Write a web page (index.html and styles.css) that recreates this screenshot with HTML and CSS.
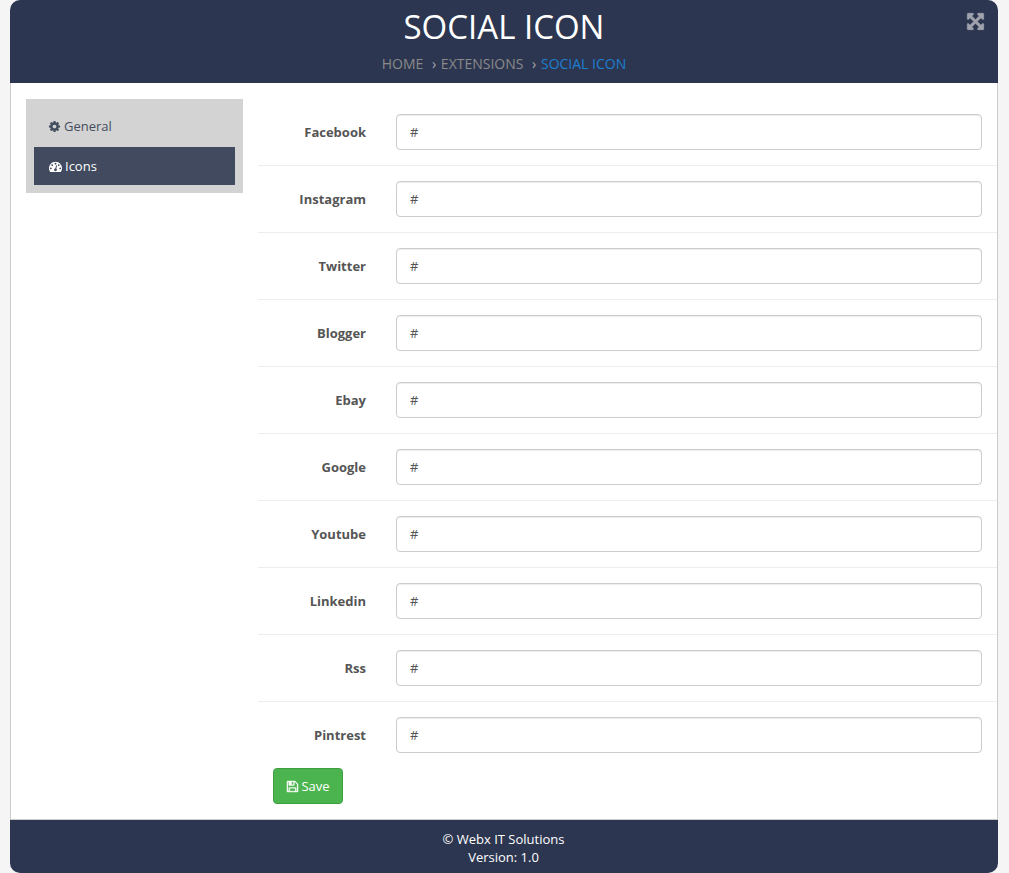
FILE: index.html
```html
<!DOCTYPE html>
<html lang="en">
<head>
<meta charset="utf-8">
<title>Social Icon</title>
<link rel="stylesheet" href="styles.css">
</head>
<body>
<div class="panel">
  <header class="head">
    <h1 class="title">SOCIAL ICON</h1>
    <nav class="crumbs">
      <span class="crumb">HOME</span>
      <span class="sep">›</span>
      <span class="crumb">EXTENSIONS</span>
      <span class="sep">›</span>
      <span class="crumb current">SOCIAL ICON</span>
    </nav>
    <svg class="expand" viewBox="0 0 1792 1792"><path fill="currentColor" stroke="currentColor" stroke-width="70" d="M1411 541l-355 355 355 355 144-144q29-31 70-14 39 17 39 59v448q0 26-19 45t-45 19h-448q-42 0-59-40-17-39 14-69l144-144-355-355-355 355 144 144q31 30 14 69-17 40-59 40h-448q-26 0-45-19t-19-45v-448q0-42 40-59 39-17 69 14l144 144 355-355-355-355-144 144q-19 19-45 19-12 0-24-5-40-17-40-59v-448q0-26 19-45t45-19h448q42 0 59 40 17 39-14 69l-144 144 355 355 355-355-144-144q-31-30-14-69 17-40 59-40h448q26 0 45 19t19 45v448q0 42-39 59-13 5-25 5-26 0-45-19z"/></svg>
  </header>
  <div class="body">
    <aside class="side">
      <a class="tab first">
        <svg class="ico gear" viewBox="0 0 1792 1792"><path fill="currentColor" d="M1152 896q0-106-75-181t-181-75-181 75-75 181 75 181 181 75 181-75 75-181zm512-109v222q0 12-8 23t-20 13l-185 28q-19 54-39 91 35 50 107 138 10 12 10 25t-9 23q-27 37-99 108t-94 71q-12 0-26-9l-138-108q-44 23-91 38-16 136-29 186-7 28-36 28h-222q-14 0-24.5-8.5t-11.5-21.5l-28-184q-49-16-90-37l-141 107q-10 9-25 9-14 0-25-11-126-114-165-168-7-10-7-23 0-12 8-23 15-21 51-66.5t54-70.5q-27-50-41-99l-183-27q-13-2-21-12.5t-8-23.5v-222q0-12 8-23t19-13l186-28q14-46 39-92-40-57-107-138-10-12-10-24 0-10 9-23 26-36 98.5-107.5t94.5-71.5q13 0 26 10l138 107q44-23 91-38 16-136 29-186 7-28 36-28h222q14 0 24.5 8.5t11.5 21.5l28 184q49 16 90 37l142-107q9-9 24-9 13 0 25 10 129 119 165 170 7 8 7 22 0 12-8 23-15 21-51 66.5t-54 70.5q26 50 41 98l183 28q13 2 21 12.5t8 23.5z"/></svg>
        General
      </a>
      <a class="tab active">
        <svg class="ico" viewBox="0 0 1792 1792"><path fill="currentColor" d="M384 1152q0-53-37.5-90.5t-90.5-37.5-90.5 37.5-37.5 90.5 37.5 90.5 90.5 37.5 90.5-37.5 37.5-90.5zm192-448q0-53-37.5-90.5t-90.5-37.5-90.5 37.5-37.5 90.5 37.5 90.5 90.5 37.5 90.5-37.5 37.5-90.5zm428 481l101-382q6-26-7.5-48.5t-38.5-29.5-48 6.5-30 39.5l-101 382q-60 5-107 43.5t-63 98.5q-20 77 20 146t117 89 146-20 89-117q16-60-6-117t-72-91zm660-33q0-53-37.5-90.5t-90.5-37.5-90.5 37.5-37.5 90.5 37.5 90.5 90.5 37.5 90.5-37.5 37.5-90.5zm-640-640q0-53-37.5-90.5t-90.5-37.5-90.5 37.5-37.5 90.5 37.5 90.5 90.5 37.5 90.5-37.5 37.5-90.5zm448 192q0-53-37.5-90.5t-90.5-37.5-90.5 37.5-37.5 90.5 37.5 90.5 90.5 37.5 90.5-37.5 37.5-90.5zm320 448q0 261-141 483-19 29-54 29h-1402q-35 0-54-29-141-221-141-483 0-182 71-348t191-286 286-191 348-71 348 71 286 191 191 286 71 348z"/></svg>
        Icons
      </a>
    </aside>
    <main class="main">
      <form class="form">
        <div class="row"><label class="lab">Facebook</label><input class="field" type="text" value="#"></div>
        <div class="row"><label class="lab">Instagram</label><input class="field" type="text" value="#"></div>
        <div class="row"><label class="lab">Twitter</label><input class="field" type="text" value="#"></div>
        <div class="row"><label class="lab">Blogger</label><input class="field" type="text" value="#"></div>
        <div class="row"><label class="lab">Ebay</label><input class="field" type="text" value="#"></div>
        <div class="row"><label class="lab">Google</label><input class="field" type="text" value="#"></div>
        <div class="row"><label class="lab">Youtube</label><input class="field" type="text" value="#"></div>
        <div class="row"><label class="lab">Linkedin</label><input class="field" type="text" value="#"></div>
        <div class="row"><label class="lab">Rss</label><input class="field" type="text" value="#"></div>
        <div class="row last"><label class="lab">Pintrest</label><input class="field" type="text" value="#"></div>
        <button class="save" type="button">
          <svg class="ico" viewBox="0 0 1792 1792"><path fill="currentColor" stroke="currentColor" stroke-width="50" d="M512 1536h768v-384h-768v384zm896 0h128v-896q0-14-10-38.5t-20-34.5l-281-281q-10-10-34-20t-39-10v416q0 40-28 68t-68 28h-576q-40 0-68-28t-28-68v-416h-128v1280h128v-416q0-40 28-68t68-28h832q40 0 68 28t28 68v416zm-384-928v-320q0-13-9.5-22.5t-22.5-9.5h-192q-13 0-22.5 9.5t-9.5 22.5v320q0 13 9.5 22.5t22.5 9.5h192q13 0 22.5-9.5t9.5-22.5zm640 32v928q0 40-28 68t-68 28h-1344q-40 0-68-28t-28-68v-1344q0-40 28-68t68-28h928q40 0 88 20t76 48l280 280q28 28 48 76t20 88z"/></svg>
          Save
        </button>
      </form>
    </main>
  </div>
  <footer class="foot">
    <div>© Webx IT Solutions</div>
    <div>Version: 1.0</div>
  </footer>
</div>
</body>
</html>
```

FILE: styles.css
```css
* { box-sizing: border-box; }
html, body { margin: 0; height: 100%; }
body {
  background: #f5f5f5;
  padding: 0 11px 0 10px;
  font-family: "Open Sans", "Noto Sans", sans-serif;
  font-size: 13px;
  color: #555;
  overflow: hidden;
}
.panel {
  height: 873px;
  display: flex;
  flex-direction: column;
}
.head {
  position: relative;
  height: 83px;
  flex: none;
  background: #2d3650;
  border-radius: 10px 10px 0 0;
  text-align: center;
  padding-top: 5px;
}
.title {
  margin: 0;
  font-size: 33px;
  font-weight: 400;
  line-height: 44px;
  color: #fff;
}
.crumbs {
  margin-top: 5px;
  font-size: 14px;
  line-height: 20px;
  color: #8a8a8a;
  white-space: nowrap;
}
.sep { margin: 0 1px 0 5px; color: #aaa; }
.current { color: #1c7fd0; }
.expand {
  position: absolute;
  top: 12px;
  right: 13px;
  width: 19px;
  height: 19px;
  color: #a0a3ae;
}
.body {
  flex: 1;
  display: flex;
  background: #fff;
  border: 1px solid #ccc;
  border-top: 0;
  padding: 16px 0 0 15px;
}
.side {
  width: 217px;
  height: 94px;
  flex: none;
  background: #d3d3d3;
  padding: 8px;
}
.tab {
  display: flex;
  align-items: center;
  gap: 3px;
  height: 38px;
  padding-left: 15px;
  color: #444d60;
  font-size: 13px;
}
.tab.first { height: 40px; padding-bottom: 2px; }
.tab.active { background: #414a5e; color: #fff; }
.ico { width: 13px; height: 13px; flex: none; }
.ico.gear { margin-left: -1px; }
.main { flex: 1; margin-left: 15px; }
.row {
  display: flex;
  align-items: center;
  padding: 15px 15px 15px 0;
  border-bottom: 1px solid #eee;
}
.row.last { border-bottom: 0; padding-bottom: 15px; }
.lab {
  width: 108px;
  text-align: right;
  margin-right: 30px;
  font-weight: 700;
  flex: none;
}
.field {
  flex: 1;
  height: 36px;
  border: 1px solid #ccc;
  border-radius: 4px;
  padding: 0 13px;
  background: #fff;
  color: #555;
  font: 13px "Open Sans", "Noto Sans", sans-serif;
  box-shadow: inset 0 1px 1px rgba(0,0,0,.075);
}
.save {
  display: flex;
  align-items: center;
  justify-content: center;
  gap: 2px;
  width: 70px;
  height: 36px;
  margin-left: 15px;
  padding: 0;
  background: #4cb44e;
  border: 1px solid #3e9f41;
  border-radius: 4px;
  color: #fff;
  font: 13px "Open Sans", "Noto Sans", sans-serif;
}
.foot {
  height: 53px;
  flex: none;
  background: #2d3650;
  border-radius: 0 0 10px 10px;
  color: #fff;
  text-align: center;
  font-size: 13px;
  line-height: 18px;
  padding: 10px 1px 0 0;
}
```
